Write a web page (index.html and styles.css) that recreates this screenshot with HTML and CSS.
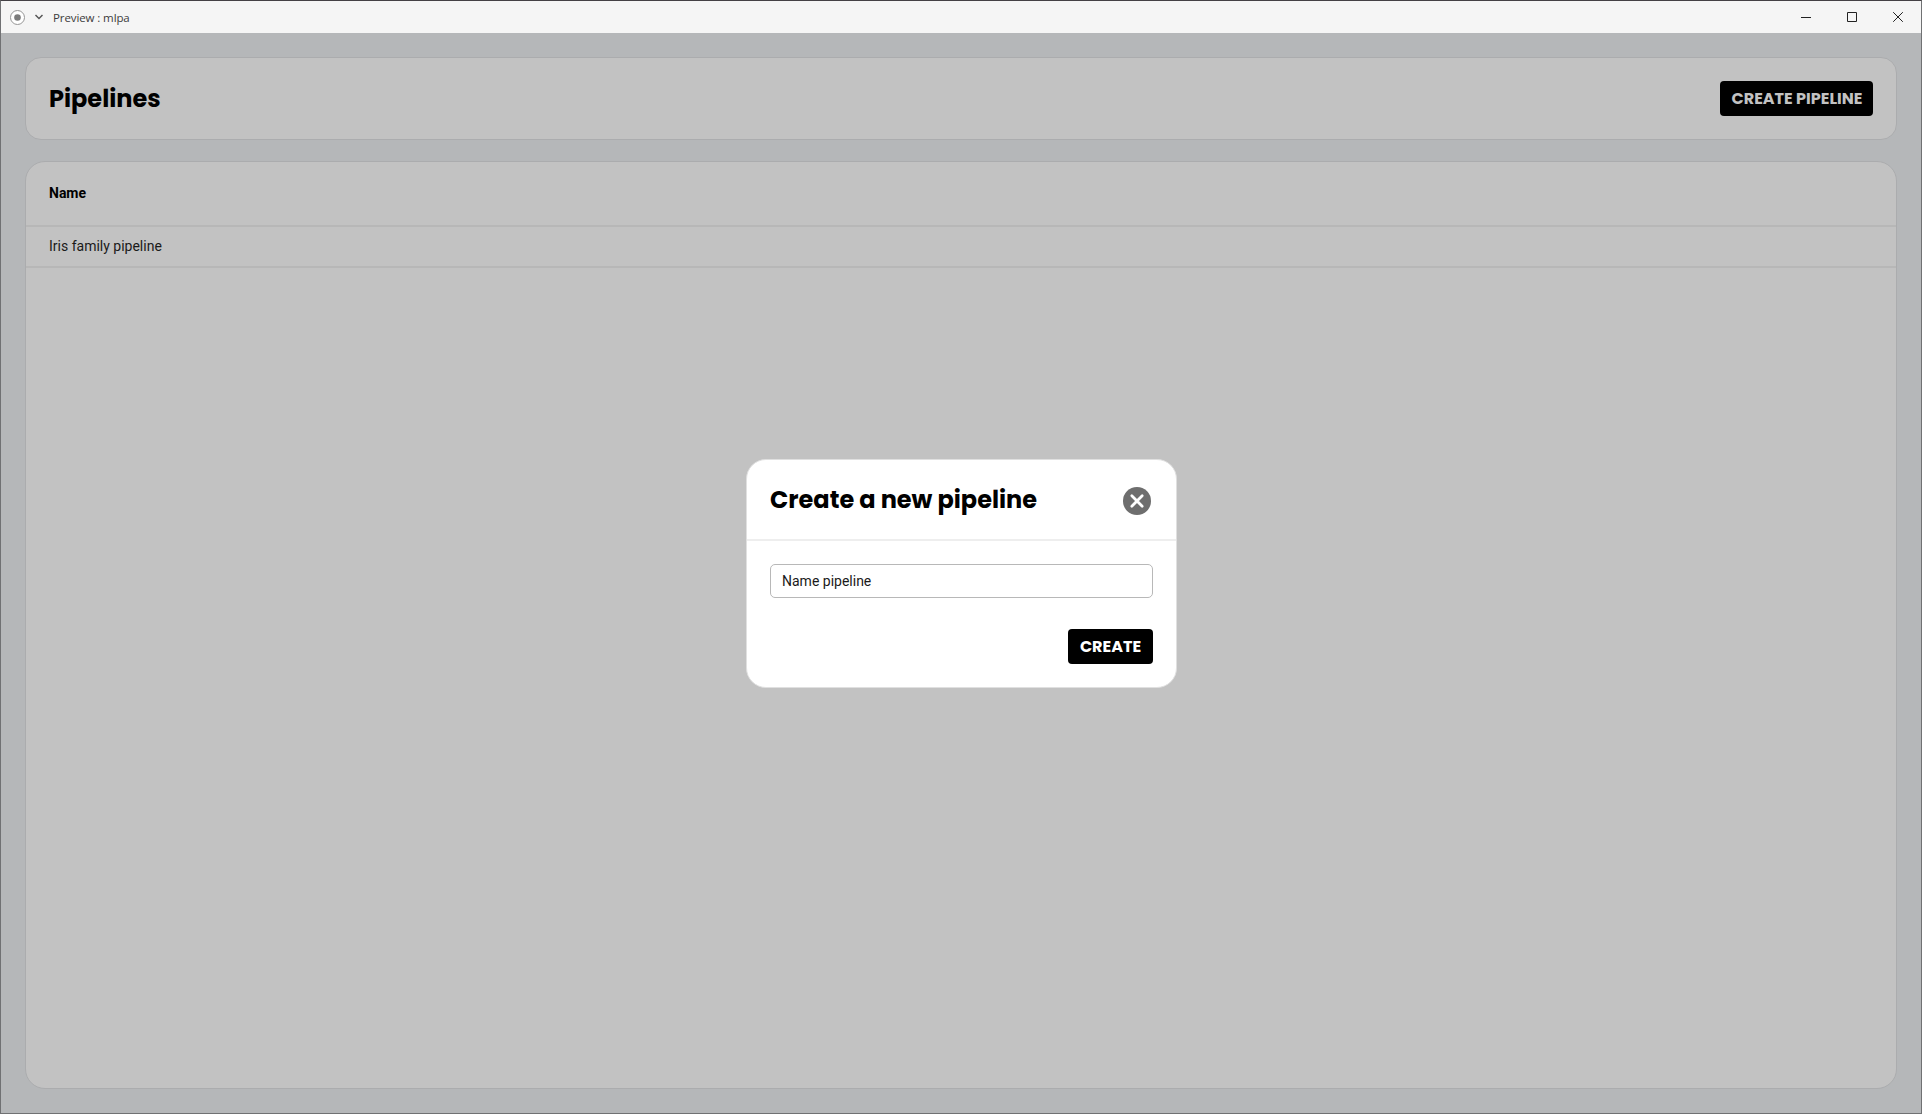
FILE: index.html
```html
<!DOCTYPE html>
<html lang="en">
<head>
<meta charset="utf-8">
<title>Preview : mlpa</title>
<link rel="stylesheet" href="styles.css">
</head>
<body>
<div class="window">
  <header class="titlebar">
    <svg class="app-icon" width="26" height="26" viewBox="0 0 26 26"><circle cx="13.5" cy="13.5" r="7" fill="#fff" stroke="#969696"/><circle cx="13.5" cy="13.5" r="3.3" fill="#7c7c7c"/></svg>
    <svg class="chevron" width="10" height="8" viewBox="0 0 10 8"><path d="M1.5 2 5 5.6 8.5 2" fill="none" stroke="#555" stroke-width="1.4"/></svg>
    <span class="window-title">Preview : mlpa</span>
    <div class="window-controls">
      <svg width="10" height="10" viewBox="0 0 10 10"><path d="M0 5.5H10" stroke="#222"/></svg>
      <svg width="10" height="10" viewBox="0 0 10 10"><path d="M.5 .5H9.5V9.5H.5Z" fill="none" stroke="#222"/></svg>
      <svg width="10" height="10" viewBox="0 0 10 10"><path d="M.2 .2 9.8 9.8M9.8 .2 .2 9.8" stroke="#222"/></svg>
    </div>
  </header>
  <main class="page">
    <section class="card heading">
      <h1 class="title">Pipelines</h1>
      <button class="button button-dimmed">CREATE PIPELINE</button>
    </section>
    <section class="card list">
      <div class="list-head">Name</div>
      <div class="list-row">Iris family pipeline</div>
    </section>
    <div class="overlay">
      <div class="modal" role="dialog">
        <div class="modal-head">
          <h2 class="title title-modal">Create a new pipeline</h2>
          <svg class="close" width="28" height="28" viewBox="0 0 28 28"><circle cx="14" cy="14" r="14" fill="#6e6e6e"/><path d="M8.8 8.8 19.2 19.2M19.2 8.8 8.8 19.2" stroke="#fff" stroke-width="2.8" stroke-linecap="round"/></svg>
        </div>
        <div class="modal-body">
          <div class="field">Name pipeline</div>
          <button class="button button-create">CREATE</button>
        </div>
      </div>
    </div>
  </main>
</div>
</body>
</html>
```
FILE: styles.css
```css
* { box-sizing: border-box; }
body { margin: 0; font-family: Roboto, sans-serif; font-size: 14px; color: #000; }
.window { display: flex; flex-direction: column; width: 100%; height: 100vh; border: 1px solid #707173; border-top-color: #444145; }
.titlebar { display: flex; align-items: center; flex: none; height: 32px; padding: 0 18px 0 3px; background: #f5f5f5; }
.chevron { margin-left: 4px; }
.window-title { margin: 2px 0 0 9px; font: 11.5px/16px "Open Sans", sans-serif; color: #3c3c3c; letter-spacing: -.1px; }
.window-controls { display: flex; gap: 36px; margin-left: auto; }
.page { position: relative; display: flex; flex-direction: column; flex: 1; gap: 21px; padding: 24px; background: #b5b7b9; }
.card { border: 1px solid #abacae; background: #c2c2c2; }
.heading { display: flex; align-items: center; justify-content: space-between; height: 83px; padding: 0 23px; border-radius: 16px; }
.title { margin: 0; font-family: Poppins, Inter, sans-serif; font-size: 24px; font-weight: 700; line-height: 36px; white-space: nowrap; }
.title-modal { padding-top: 1px; }
.button { height: 35px; padding: 0; border: 0; border-radius: 4px; background: #000; color: #fff; font: 700 16px Poppins, Inter, sans-serif; white-space: nowrap; }
.button-dimmed { width: 153px; padding-left: 1px; color: #c2c2c2; }
.list { flex: 1; border-radius: 20px; }
.list-head { height: 65px; padding-left: 23px; border-bottom: 2px solid #b7b7b7; font-weight: 700; line-height: 62px; }
.list-row { height: 41px; padding-left: 23px; border-bottom: 2px solid #b7b7b7; line-height: 39px; color: #1a1a1a; }
.overlay { position: absolute; inset: 0; display: flex; align-items: center; justify-content: center; padding: 1px 0 0 1px; }
.modal { width: 431px; height: 229px; border: 1px solid #e0e0e0; border-radius: 20px; background: #fff; }
.modal-head { display: flex; align-items: center; justify-content: space-between; height: 81px; padding: 0 25px 0 23px; border-bottom: 2px solid #eee; }
.close { margin-top: 2px; }
.modal-body { display: flex; flex-direction: column; padding: 23px; }
.field { height: 34px; padding-left: 11px; border: 1px solid #b8b8b8; border-radius: 5px; line-height: 32px; color: #1a1a1a; }
.button-create { align-self: flex-end; width: 85px; margin-top: 31px; }
```
